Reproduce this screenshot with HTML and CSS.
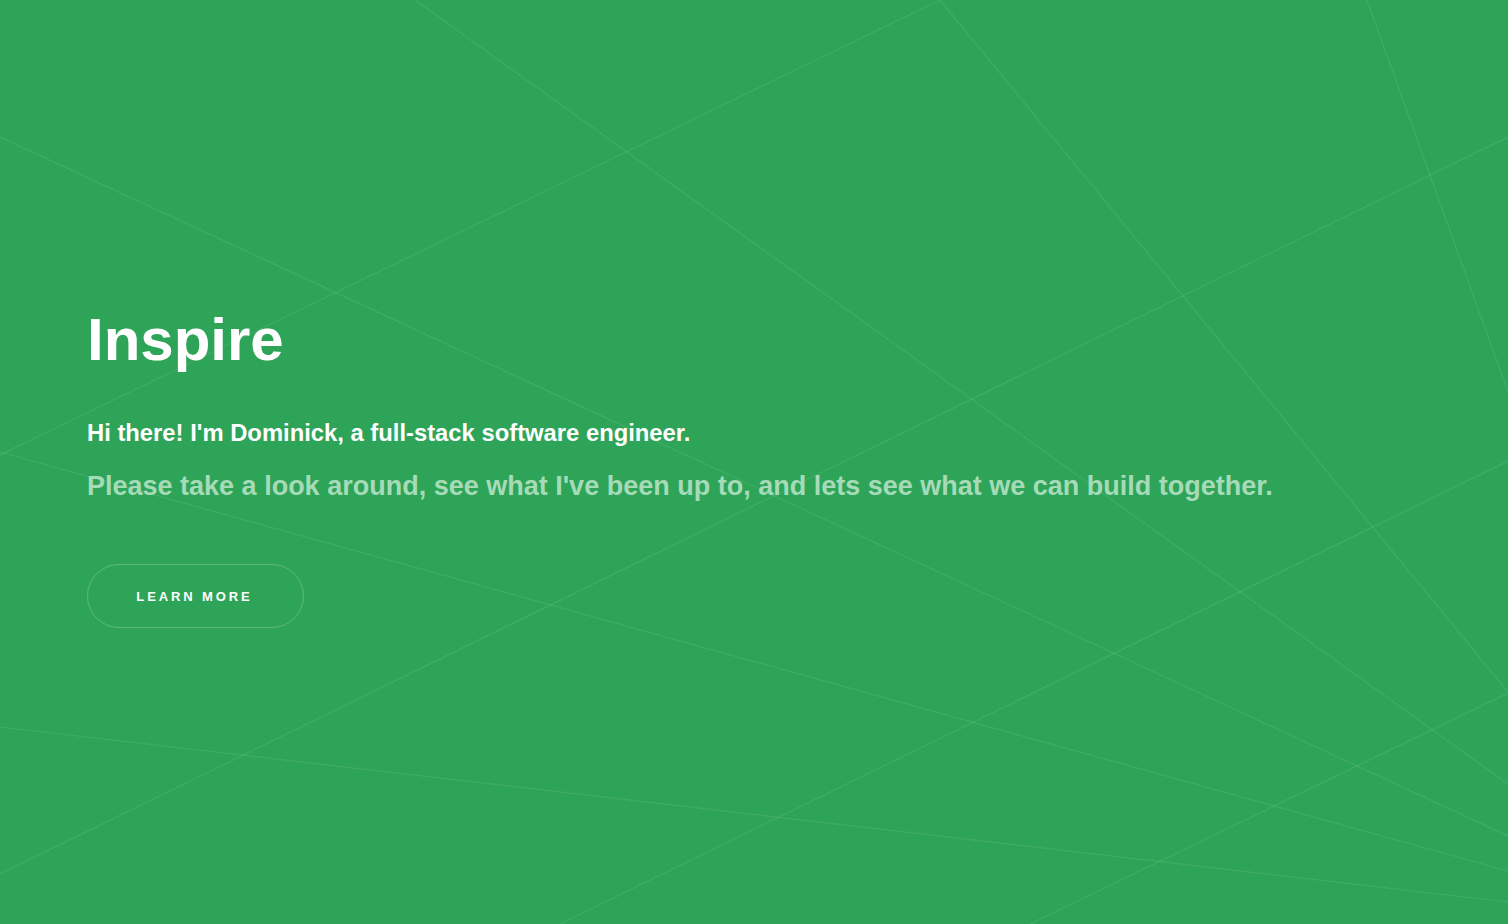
FILE: index.html
```html
<!DOCTYPE html>
<html lang="en">
<head>
<meta charset="utf-8">
<title>Inspire</title>
<link rel="stylesheet" href="styles.css">
</head>
<body>
<section class="hero">
  <svg class="hero-lines" width="1508" height="924" viewBox="0 0 1508 924" aria-hidden="true">
    <g stroke="rgba(255,255,255,0.09)" stroke-width="1.2" fill="none">
      <line x1="415" y1="0" x2="1508" y2="784"/>
      <line x1="940" y1="0" x2="1508" y2="692"/>
      <line x1="1367" y1="0" x2="1508" y2="392"/>
      <line x1="0" y1="137" x2="1508" y2="836"/>
      <line x1="0" y1="874" x2="1508" y2="137"/>
      <line x1="0" y1="452" x2="1508" y2="871"/>
      <line x1="560" y1="924" x2="1508" y2="461"/>
      <line x1="1030" y1="924" x2="1508" y2="693"/>
      <line x1="0" y1="727" x2="1508" y2="902"/>
      <line x1="0" y1="455" x2="940" y2="0"/>
    </g>
  </svg>
  <div class="hero-content">
    <h1 class="hero-title">Inspire</h1>
    <p class="hero-intro">Hi there! I'm Dominick, a full-stack software engineer.</p>
    <p class="hero-sub">Please take a look around, see what I've been up to, and lets see what we can build together.</p>
    <a class="hero-btn" href="#">Learn More</a>
  </div>
</section>
</body>
</html>
```

FILE: styles.css
```css
html, body {
  margin: 0;
  padding: 0;
}
body {
  font-family: "Liberation Sans", Arial, sans-serif;
  background: #2ea459;
  color: #fff;
}
.hero {
  position: relative;
  width: 1508px;
  height: 924px;
  overflow: hidden;
  background: #2ea459;
}
.hero-lines {
  position: absolute;
  left: 0;
  top: 0;
}
.hero-content {
  position: relative;
  display: flex;
  flex-direction: column;
  align-items: flex-start;
  padding: 310px 0 0 87px;
}
.hero-title {
  margin: 0;
  font-size: 60px;
  line-height: 60px;
  font-weight: 700;
  color: #fff;
}
.hero-intro {
  margin: 49px 0 0;
  font-size: 23.8px;
  line-height: 28px;
  font-weight: 700;
  color: #fff;
}
.hero-sub {
  margin: 24px 0 0;
  font-size: 27px;
  line-height: 31px;
  font-weight: 700;
  color: #a6dbb8;
}
.hero-btn {
  margin-top: 62px;
  box-sizing: border-box;
  width: 217px;
  height: 64px;
  display: flex;
  align-items: center;
  justify-content: center;
  border: 1px solid rgba(255,255,255,0.22);
  border-radius: 32px;
  color: #fff;
  text-decoration: none;
  text-transform: uppercase;
  font-size: 13px;
  font-weight: 700;
  letter-spacing: 2.9px;
  padding-right: 2px;
}
```
